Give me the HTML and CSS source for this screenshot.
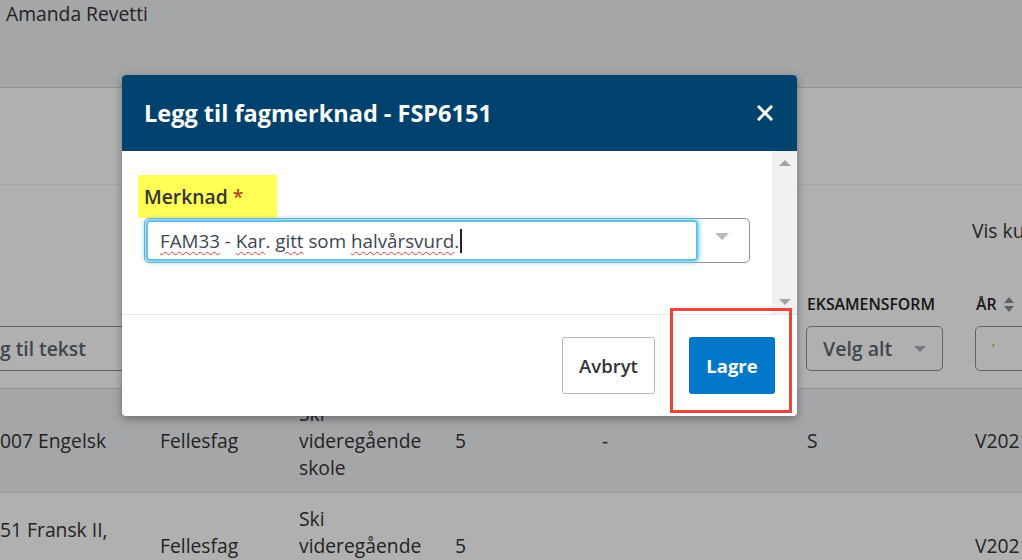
FILE: index.html
```html
<!DOCTYPE html>
<html lang="no">
<head>
<meta charset="utf-8">
<title>Legg til fagmerknad</title>
<link rel="stylesheet" href="styles.css">
</head>
<body>
<div class="page">
  <header class="topbar">
    <div class="user">Amanda Revetti</div>
  </header>
  <div class="band"></div>
  <section class="toolbar grid">
    <div class="c7 vis">Vis kun mine fag</div>
  </section>
  <section class="thead">
    <div class="grid labels">
      <div class="c6 th">EKSAMENSFORM</div>
      <div class="c7 th">ÅR
        <svg class="sort" width="10" height="15" viewBox="0 0 10 15"><path d="M5 0 L10 6 L0 6 Z M0 9 L10 9 L5 15 Z" fill="#8c8f93"/></svg>
      </div>
    </div>
    <div class="grid filters">
      <div class="c1 textfilter">g til tekst</div>
      <div class="c6 selfilter"><span>Velg alt</span><i class="caret"></i></div>
      <div class="c7 selfilter small"><span>'</span><i class="caret"></i></div>
    </div>
  </section>
  <div class="row grid alt">
    <div class="c1 cell">007 Engelsk</div>
    <div class="c2 cell">Fellesfag</div>
    <div class="c3 cell">Ski<br>videregående<br>skole</div>
    <div class="c4 cell">5</div>
    <div class="c5 cell">-</div>
    <div class="c6 cell">S</div>
    <div class="c7 cell">V2021</div>
  </div>
  <div class="row grid second">
    <div class="c1 cell top">51 Fransk II,</div>
    <div class="c2 cell">Fellesfag</div>
    <div class="c3 cell">Ski<br>videregående<br>skole</div>
    <div class="c4 cell">5</div>
    <div class="c5 cell"></div>
    <div class="c6 cell"></div>
    <div class="c7 cell">V2021</div>
  </div>
</div>

<div class="backdrop"></div>

<div class="modal" role="dialog" aria-labelledby="mtitle">
  <div class="modal-head">
    <h2 id="mtitle">Legg til fagmerknad - FSP6151</h2>
    <button class="close" aria-label="Lukk">
      <svg width="16" height="16" viewBox="0 0 16 16"><path d="M2 2 L14 14 M14 2 L2 14" stroke="#fff" stroke-width="3" stroke-linecap="square"/></svg>
    </button>
  </div>
  <div class="modal-body">
    <div class="content">
      <div class="label"><span>Merknad</span> <span class="req">*</span></div>
      <div class="select">
        <div class="input"><span class="sp">FAM33</span> - <span class="sp">Kar</span>. <span class="sp">gitt</span> som <span class="sp">halvårsvurd</span>.<span class="cursor"></span></div>
        <div class="arrow"><i class="caret light"></i></div>
      </div>
    </div>
    <div class="scrollbar">
      <i class="sb up"></i>
      <i class="sb down"></i>
    </div>
  </div>
  <div class="modal-foot">
    <button class="btn secondary">Avbryt</button>
    <button class="btn primary">Lagre</button>
  </div>
</div>

<div class="annotation"></div>
</body>
</html>
```

FILE: styles.css
```css
* { box-sizing: border-box; }
html, body { margin: 0; padding: 0; }
body {
  width: 1022px;
  height: 560px;
  overflow: hidden;
  font-family: "Open Sans", "Liberation Sans", sans-serif;
  font-size: 19.3px;
  line-height: 27px;
  color: #333;
  background: #fff;
  position: relative;
}

.page { width: 1022px; }

.topbar {
  height: 88px;
  background: #eff1f3;
  border-bottom: 1px solid #d6d7d9;
  padding-left: 6px;
}
.user { line-height: 27px; }

.band {
  height: 97px;
  background: #fff;
  border-bottom: 1px solid #f0f0f0;
}

.grid {
  display: grid;
  grid-template-columns: 160px 139px 156px 147px 205px 168px 1fr;
}
.c1 { grid-column: 1; }
.c2 { grid-column: 2; }
.c3 { grid-column: 3; }
.c4 { grid-column: 4; }
.c5 { grid-column: 5; }
.c6 { grid-column: 6; }
.c7 { grid-column: 7; }

.toolbar { height: 95px; padding-top: 32px; }
.vis { white-space: nowrap; overflow: hidden; margin-left: -3px; }

.thead { padding-bottom: 17px; border-bottom: 1px solid #d8d8d8; }
.labels { height: 34px; align-items: end; }
.th {
  font-size: 15.8px;
  font-weight: 600;
  color: #222;
  line-height: 20px;
  white-space: nowrap;
  display: flex;
  align-items: center;
  gap: 7px;
}
.c7.th { padding-left: 1px; }
.sort { display: block; }

.filters { margin-top: 12px; height: 45px; }
.textfilter {
  grid-column: 1 / 4;
  margin-left: -12px;
  border: 1px solid #8e9093;
  border-radius: 5px;
  height: 45px;
  padding: 8px 11px;
  font-weight: 600;
  color: #5a6672;
  white-space: nowrap;
}
.selfilter {
  height: 45px;
  margin-left: -1px;
  width: 137px;
  border: 1px solid #8e9093;
  border-radius: 5px;
  padding: 8px 16px;
  font-weight: 600;
  color: #5a6672;
  display: flex;
  align-items: center;
  justify-content: space-between;
  font-size: 19.5px;
}
.selfilter.small { width: 80px; margin-left: 0; color: #c9a000; font-size: 12px; }
.caret {
  display: block;
  width: 0; height: 0;
  border-left: 6px solid transparent;
  border-right: 6px solid transparent;
  border-top: 6px solid #a9adb2;
}

.row {
  border-bottom: 1px solid #e2e2e2;
  align-items: center;
  padding: 11px 0;
}
.row.alt { background: #f0f1f3; height: 104px; }
.cell { white-space: nowrap; }
.second { padding-top: 12px; }
.second .c1.cell { align-self: start; margin-top: 11px; }

.backdrop {
  position: absolute;
  inset: 0;
  background: rgba(0, 0, 0, 0.31);
}

.modal {
  position: absolute;
  left: 122px;
  top: 75px;
  width: 675px;
  height: 341px;
  background: #fff;
  border-radius: 4px;
  box-shadow: 0 3px 10px rgba(0, 0, 0, 0.35);
  display: flex;
  flex-direction: column;
  overflow: hidden;
}
.modal-head {
  height: 76px;
  background: #00426e;
  display: flex;
  align-items: center;
  justify-content: space-between;
  padding: 0 24px 0 22px;
}
.modal-head h2 {
  margin: 0;
  color: #fff;
  font-size: 23.5px;
  font-weight: 700;
  line-height: 30px;
}
.close {
  background: none;
  border: 0;
  padding: 0;
  width: 16px;
  height: 16px;
  display: block;
}
.close svg { display: block; }

.modal-body {
  height: 164px;
  display: flex;
  border-bottom: 1px solid #e6e6e6;
}
.content {
  flex: 1;
  padding: 24px 22px 0 16px;
}
.label {
  display: inline-block;
  background: #ffff55;
  padding: 8px 6px;
  font-weight: 600;
  color: #333;
  width: 139px;
}
.req { color: #b5402a; }

.select {
  margin-left: 6px;
  height: 45px;
  border: 1px solid #8d969e;
  border-radius: 5px;
  display: flex;
  align-items: stretch;
}
.input {
  flex: 1;
  margin: 1px 0 1px 1px;
  border: 2px solid #5fc4ea;
  border-radius: 4px;
  box-shadow: 0 0 5px 1px #66c8ee;
  padding: 4px 12px 0 12px;
  font-size: 18.8px;
  line-height: 30px;
  color: #3d4650;
  white-space: nowrap;
}
.sp {
  text-decoration: underline wavy #e0403a;
  text-decoration-thickness: 1px;
  text-underline-offset: 3px;
}
.cursor {
  display: inline-block;
  width: 2px;
  height: 24px;
  background: #222;
  vertical-align: -5px;
  margin-left: 1px;
}
.arrow {
  width: 51px;
  display: flex;
  align-items: center;
  justify-content: center;
  padding-bottom: 8px;
  padding-right: 4px;
}
.caret.light { border-top-color: #b7bcc1; border-left-width: 7px; border-right-width: 7px; border-top-width: 7px; }

.scrollbar {
  width: 25px;
  background: #f1f1f1;
  display: flex;
  flex-direction: column;
  justify-content: space-between;
  align-items: center;
  padding: 9px 0 9px;
}
.sb {
  display: block;
  width: 0; height: 0;
  border-left: 6px solid transparent;
  border-right: 6px solid transparent;
}
.sb.up { border-bottom: 6px solid #a3a3a3; }
.sb.down { border-top: 6px solid #a3a3a3; }

.modal-foot {
  flex: 1;
  display: flex;
  justify-content: flex-end;
  align-items: flex-start;
  gap: 34px;
  padding: 22px 22px 0;
}
.btn {
  height: 57px;
  font-family: "Open Sans", "Liberation Sans", sans-serif;
  font-size: 18.5px;
  border-radius: 3px;
  cursor: pointer;
}
.btn.secondary {
  width: 93px;
  background: #fff;
  border: 1px solid #b9b9b9;
  color: #333;
  font-weight: 600;
}
.btn.primary {
  width: 86px;
  background: #0077c8;
  border: 0;
  color: #fff;
  font-weight: 700;
}

.annotation {
  position: absolute;
  left: 670px;
  top: 308px;
  width: 122px;
  height: 105px;
  border: 3px solid #e8463d;
}
```
